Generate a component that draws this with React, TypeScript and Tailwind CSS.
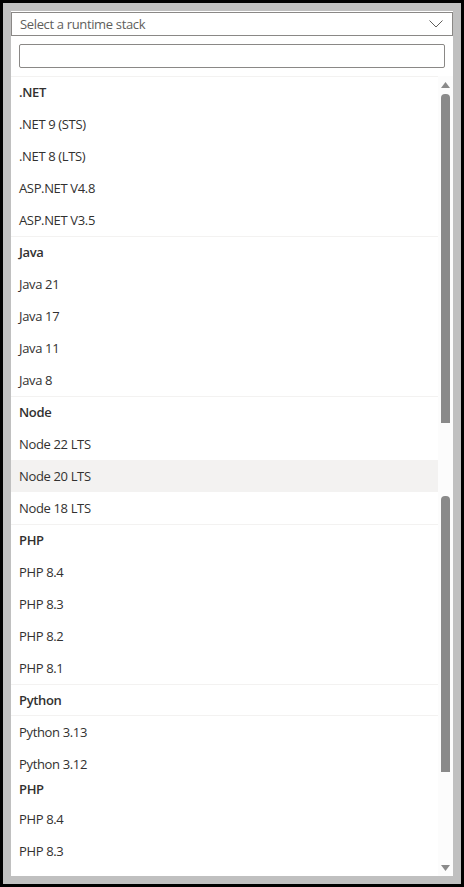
import React from 'react';

type Group = { title: string; items: string[]; compact?: boolean };

const groups: Group[] = [
  { title: '.NET', items: ['.NET 9 (STS)', '.NET 8 (LTS)', 'ASP.NET V4.8', 'ASP.NET V3.5'] },
  { title: 'Java', items: ['Java 21', 'Java 17', 'Java 11', 'Java 8'] },
  { title: 'Node', items: ['Node 22 LTS', 'Node 20 LTS', 'Node 18 LTS'] },
  { title: 'PHP', items: ['PHP 8.4', 'PHP 8.3', 'PHP 8.2', 'PHP 8.1'] },
  { title: 'Python', items: ['Python 3.13', 'Python 3.12'] },
  { title: 'PHP', items: ['PHP 8.4', 'PHP 8.3'], compact: true },
];

const Scrollbar: React.FC = () => (
  <div className="w-[15px] h-full bg-[#fcfcfc] flex flex-col items-center pt-[6px] pb-[5px]">
    <svg width="9" height="6" viewBox="0 0 9 6">
      <path d="M0 6 L4.5 0 L9 6 Z" fill="#8a8a8a" />
    </svg>
    <div className="mt-[6px] w-[9px] h-[329px] bg-[#8a8a8a] rounded-t-[4px]" />
    <div className="mt-[73px] w-[9px] h-[276px] bg-[#8a8a8a] rounded-t-[4px]" />
    <div className="flex-1" />
    <svg width="9" height="6" viewBox="0 0 9 6">
      <path d="M0 0 L9 0 L4.5 6 Z" fill="#8a8a8a" />
    </svg>
  </div>
);

export default function App() {
  return (
    <div className="w-[464px] h-[887px] bg-black p-[3px] font-['Open_Sans',sans-serif] text-[13px] tracking-[-0.35px] text-[#323130]">
      <div className="h-full bg-[#c0c0c0] p-[8px]">
        <div className="h-full bg-white flex flex-col overflow-hidden">
          <div className="mt-px h-[24px] border border-[#8a8886] flex items-center justify-between pl-[8px] pr-[8px]">
            <span className="text-[#605e5c] pt-px">Select a runtime stack</span>
            <svg width="14" height="8" viewBox="0 0 14 8" className="mr-px">
              <path d="M0.5 0.5 L7 7 L13.5 0.5" fill="none" stroke="#605e5c" strokeWidth="1" />
            </svg>
          </div>
          <div className="mx-[8px] mt-[8px] h-[24px] border border-[#8a8886] rounded-[2px]" />
          <div className="mt-[8px] flex-1 flex min-h-0">
            <div className="flex-1 flex flex-col overflow-hidden">
              {groups.map((g, gi) => (
                <div key={gi} className={g.compact ? '' : 'border-t border-[#f3f2f1]'}>
                  {g.compact ? (
                    <div className="h-[23px] pl-[8px] leading-[16px] pt-px font-semibold">{g.title}</div>
                  ) : (
                    <div
                      className={
                        'h-[31px] pl-[8px] pt-px flex items-center font-semibold' +
                        (g.title === 'Python' ? ' border-b border-[#f3f2f1]' : '')
                      }
                    >
                      {g.title}
                    </div>
                  )}
                  {g.items.map((it) => (
                    <div
                      key={it}
                      className={
                        'h-[32px] pl-[8px] pt-px flex items-center' +
                        (gi === 2 && it === 'Node 20 LTS' ? ' bg-[#f3f2f1]' : '')
                      }
                    >
                      {it}
                    </div>
                  ))}
                </div>
              ))}
            </div>
            <Scrollbar />
          </div>
        </div>
      </div>
    </div>
  );
}
